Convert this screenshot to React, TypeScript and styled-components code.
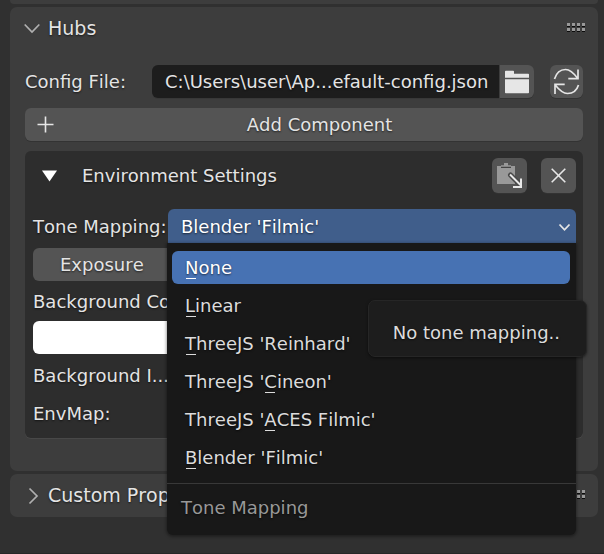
import React, { useState } from "react";
import styled, { createGlobalStyle, css } from "styled-components";

const GlobalStyle = createGlobalStyle`
  * { box-sizing: border-box; }
  body {
    margin: 0;
    background: #303030;
    color: #e4e4e4;
    font: 18px/23px "DejaVu Sans", sans-serif;
    font-kerning: none;
    text-shadow: 0 1px 2px rgba(0, 0, 0, 0.6);
    overflow: hidden;
  }
  button, input, select { font: inherit; color: inherit; text-shadow: inherit; border: 0; margin: 0; }
  svg { display: block; flex: none; }
`;

const Sidebar = styled.main`
  display: flex;
  flex-direction: column;
  gap: 3px;
  min-height: 100vh;
  padding: 0 6px 0 10px;
  border-bottom: 1px solid #272727;
`;

const PanelTail = styled.div`
  height: 4px;
  border-radius: 0 0 7px 7px;
  background: #3d3d3d;
`;

const Panel = styled.section`
  border-radius: 7px;
  background: #3d3d3d;
`;

const PanelHeader = styled.header`
  display: flex;
  align-items: center;
  height: 43px;
  padding: 0 13px 0 14px;
`;

const PanelToggle = styled.button`
  display: flex;
  flex: 1;
  align-items: center;
  gap: 8px;
  padding: 0;
  background: none;
  font-size: 19px;
  text-align: left;
`;

const PanelBody = styled.div`
  display: flex;
  flex-direction: column;
  gap: 10px;
  padding: 15px 15px 33px;
`;

const ConfigRow = styled.div`
  display: flex;
  align-items: center;
  height: 33px;
`;

const ConfigLabel = styled.label`
  flex: 0 0 127px;
`;

const PathInput = styled.input`
  flex: 1;
  min-width: 0;
  height: 33px;
  padding: 0 8px 0 13px;
  border-radius: 6px 0 0 6px;
  background: #1d1d1d;
  outline: none;
  box-shadow: 0 1px 0 #383838;
`;

const IconButton = styled.button<{ $joined?: boolean; $large?: boolean }>`
  display: flex;
  align-items: center;
  justify-content: center;
  width: ${(p) => (p.$large ? 35 : 33)}px;
  height: ${(p) => (p.$large ? 35 : 33)}px;
  padding: 0;
  border-radius: 6px;
  background: #545454;
  box-shadow: 0 1px 0 #333;
  ${(p) =>
    p.$joined &&
    css`
      width: 34px;
      margin: 0 16px 0 1px;
      border-radius: 0 6px 6px 0;
    `}
`;

const AddButton = styled.button`
  display: flex;
  align-items: center;
  width: 100%;
  height: 33px;
  padding: 0 0 0 12px;
  border-radius: 6px;
  background: #545454;
  box-shadow: 0 1px 0 #333;
`;

const AddText = styled.span`
  flex: 1;
  padding-left: 2px;
`;

const ComponentBox = styled.section`
  padding: 7px 7px 8px 8px;
  border-radius: 6px;
  background: #2d2d2d;
  box-shadow: 0 1px 0 #484848;
`;

const BoxHeader = styled.header`
  display: flex;
  align-items: center;
  gap: 14px;
  height: 35px;
  margin-bottom: 16px;
`;

const BoxToggle = styled.button`
  display: flex;
  flex: 1;
  align-items: center;
  gap: 25px;
  padding: 0 0 0 8px;
  background: none;
  text-align: left;
`;

const Properties = styled.div`
  display: flex;
  flex-direction: column;
  gap: 5px;
`;

const ToneRow = styled.div`
  display: flex;
  align-items: center;
  height: 34px;
`;

const ToneLabel = styled.label`
  flex: 0 0 135px;
  min-width: 0;
  white-space: nowrap;
`;

const SelectWrap = styled.div`
  position: relative;
  flex: 1;
  min-width: 0;
`;

const Select = styled.select`
  display: block;
  width: 100%;
  height: 34px;
  padding: 0 32px 0 13px;
  border-radius: 6px 6px 0 0;
  background: #405e8b;
  color: #fff;
  appearance: none;
  outline: none;
`;

const SelectArrow = styled.svg`
  position: absolute;
  top: 14px;
  right: 5px;
  pointer-events: none;
`;

const Menu = styled.div`
  position: absolute;
  z-index: 2;
  top: 34px;
  left: -1px;
  right: 0;
  border-radius: 0 0 6px 6px;
  background: #181818;
  box-shadow: 0 1px 3px 1px rgba(0, 0, 0, 0.35);
`;

const MenuList = styled.ul`
  display: flex;
  flex-direction: column;
  gap: 5px;
  margin: 0;
  padding: 8px 6px 9px 5px;
  list-style: none;
`;

const MenuItem = styled.button<{ $active: boolean }>`
  display: block;
  width: 100%;
  height: 33px;
  padding: 0 13px;
  border-radius: 6px;
  background: ${(p) => (p.$active ? "#4772b3" : "transparent")};
  color: ${(p) => (p.$active ? "#fff" : "#dcdcdc")};
  text-align: left;
  white-space: pre;
`;

const HotKey = styled.span`
  position: relative;
  &::after {
    content: "";
    position: absolute;
    left: 1px;
    bottom: -1px;
    width: 10px;
    height: 1px;
    background: currentColor;
  }
`;

const MenuTitle = styled.div`
  padding: 12px 14px 16px;
  border-top: 1px solid #383838;
  color: #989898;
`;

const Tooltip = styled.div`
  position: absolute;
  z-index: 3;
  top: 91px;
  right: -11px;
  padding: 20px 26px 12px 24px;
  border: 1px solid #262626;
  border-radius: 7px;
  background: #1d1d1d;
  box-shadow: 0 1px 3px rgba(0, 0, 0, 0.5);
  color: #dcdcdc;
  white-space: nowrap;
`;

const ExposureField = styled.button`
  height: 33px;
  padding: 0 27px;
  border-radius: 6px;
  background: #545454;
  text-align: left;
`;

const PropertyLabel = styled.label<{ $short?: boolean }>`
  display: flex;
  align-items: center;
  height: ${(p) => (p.$short ? 30 : 33)}px;
`;

const ColorInput = styled.input`
  width: 100%;
  height: 33px;
  padding: 0;
  border-radius: 6px;
  background: #fff;
  appearance: none;
  overflow: hidden;
  &::-webkit-color-swatch-wrapper { padding: 0; }
  &::-webkit-color-swatch { border: 0; }
`;

const Chevron = ({ open }: { open: boolean }) => (
  <svg width="16" height="18" viewBox="0 0 16 18" fill="none" stroke="#b0b0b0" strokeWidth="1.7">
    <path d={open ? "M.7 4.5 8 12l7.300-7.500" : "M5.500 1.500 13 9l-7.500 7.500"} />
  </svg>
);

const Grip = () => (
  <svg width="18" height="11" viewBox="0 0 18 11" shapeRendering="crispEdges" aria-hidden="true">
    {[0, 5].map((y) =>
      [0, 5, 10, 15].map((x) => (
        <g key={`${x}-${y}`}>
          <rect x={x} y={y} width="3" height="3" fill="#999" />
          <rect x={x} y={y + 3} width="3" height="1" fill="#0c0c0c" />
        </g>
      ))
    )}
  </svg>
);

const FolderIcon = () => (
  <svg width="26" height="25" viewBox="0 0 26 25" fill="#e6e6e6">
    <path d="M1 2.500q0-.8.8-.8h7.400q.8 0 .8.800v2.300h14.200q.8 0 .8.800v3.100H1zM1 10.300h24v13.200q0 .8-.8.800H1.800q-.8 0-.8-.8z" />
  </svg>
);

const RefreshIcon = () => (
  <svg width="27" height="27" viewBox="0 0 27 27" fill="none" stroke="#e6e6e6" strokeWidth="1.700">
    <path d="M1.500 11C3.500 4.500 8 1.500 12.500 1.500c4 0 7.500 2.500 12.300 9M25 1.500v9.200h-9.700M25.500 17c-2 6.500-6.500 8.500-11 8.500-4 0-7.500-2.500-12.300-8.500M2 26v-9.700h9.700" />
  </svg>
);

const PlusIcon = () => (
  <svg width="17" height="17" viewBox="0 0 17 17" stroke="#e6e6e6" strokeWidth="1.600">
    <path d="M8.500.5v16M.5 8.500h16" />
  </svg>
);

const PasteIcon = () => (
  <svg width="27" height="27" viewBox="0 0 27 27">
    <path fill="#999" d="M1 4h18v18H1z" />
    <path fill="#444" d="M5 4h10v2H5z" />
    <path fill="#999" d="M5 4.800V3.200h3V1h4v2.200h3v1.600z" />
    <path fill="none" stroke="#484848" strokeWidth="5" strokeLinecap="round" d="m14.500 13 9 9" />
    <path fill="none" stroke="#e8e8e8" strokeWidth="2" d="m14 12.500 10.500 10.500M17 25h8v-8.500" />
  </svg>
);

const CloseIcon = () => (
  <svg width="15" height="15" viewBox="0 0 15 15" stroke="#e6e6e6" strokeWidth="1.600">
    <path d="m.7.7 13.600 13.600M14.300.7.7 14.300" />
  </svg>
);

const TriangleIcon = () => (
  <svg width="16" height="12" viewBox="0 0 16 12" fill="#fff">
    <path d="M1 .5h15L8.500 11.500z" />
  </svg>
);

const modes: [string, string, string][] = [
  ["", "N", "one"],
  ["", "L", "inear"],
  ["", "T", "hreeJS 'Reinhard'"],
  ["ThreeJS '", "C", "ineon'"],
  ["ThreeJS '", "A", "CES Filmic'"],
  ["", "B", "lender 'Filmic'"],
];

export default function App() {
  const [active, setActive] = useState(0);
  const [mode, setMode] = useState("Blender 'Filmic'");
  const [color, setColor] = useState("#ffffff");

  return (
    <>
      <GlobalStyle />
      <Sidebar>
        <PanelTail />
        <Panel>
          <PanelHeader>
            <PanelToggle aria-expanded="true">
              <Chevron open />
              Hubs
            </PanelToggle>
            <Grip />
          </PanelHeader>
          <PanelBody>
            <ConfigRow>
              <ConfigLabel htmlFor="config">Config File:</ConfigLabel>
              <PathInput id="config" defaultValue="C:\Users\user\Ap...efault-config.json" />
              <IconButton $joined aria-label="Browse">
                <FolderIcon />
              </IconButton>
              <IconButton aria-label="Reload">
                <RefreshIcon />
              </IconButton>
            </ConfigRow>
            <AddButton>
              <PlusIcon />
              <AddText>Add Component</AddText>
            </AddButton>
            <ComponentBox>
              <BoxHeader>
                <BoxToggle aria-expanded="true">
                  <TriangleIcon />
                  Environment Settings
                </BoxToggle>
                <IconButton $large aria-label="Paste">
                  <PasteIcon />
                </IconButton>
                <IconButton $large aria-label="Remove">
                  <CloseIcon />
                </IconButton>
              </BoxHeader>
              <Properties>
                <ToneRow>
                  <ToneLabel htmlFor="tone">Tone Mapping:</ToneLabel>
                  <SelectWrap>
                    <Select id="tone" value={mode} onChange={(e) => setMode(e.target.value)}>
                      {modes.map((m) => (
                        <option key={m.join("")}>{m.join("")}</option>
                      ))}
                    </Select>
                    <SelectArrow width="13" height="9" viewBox="0 0 13 9" fill="none" stroke="#e6e6e6" strokeWidth="1.800">
                      <path d="M1.500 1.500 6.500 6.800l5-5.300" />
                    </SelectArrow>
                    <Menu>
                      <MenuList>
                        {modes.map(([before, key, after], i) => (
                          <li key={before + key}>
                            <MenuItem
                              $active={i === active}
                              onMouseEnter={() => setActive(i)}
                              onClick={() => setMode(before + key + after)}
                            >
                              {before}
                              <HotKey>{key}</HotKey>
                              {after}
                            </MenuItem>
                          </li>
                        ))}
                      </MenuList>
                      <MenuTitle>Tone Mapping</MenuTitle>
                    </Menu>
                    <Tooltip role="tooltip">No tone mapping..</Tooltip>
                  </SelectWrap>
                </ToneRow>
                <ExposureField>Exposure</ExposureField>
                <PropertyLabel $short htmlFor="background">Background Color:</PropertyLabel>
                <ColorInput id="background" type="color" value={color} onChange={(e) => setColor(e.target.value)} />
                <PropertyLabel as="div">Background I...</PropertyLabel>
                <PropertyLabel as="div">EnvMap:</PropertyLabel>
              </Properties>
            </ComponentBox>
          </PanelBody>
        </Panel>
        <Panel>
          <PanelHeader>
            <PanelToggle aria-expanded="false">
              <Chevron open={false} />
              Custom Properties
            </PanelToggle>
            <Grip />
          </PanelHeader>
        </Panel>
      </Sidebar>
    </>
  );
}
